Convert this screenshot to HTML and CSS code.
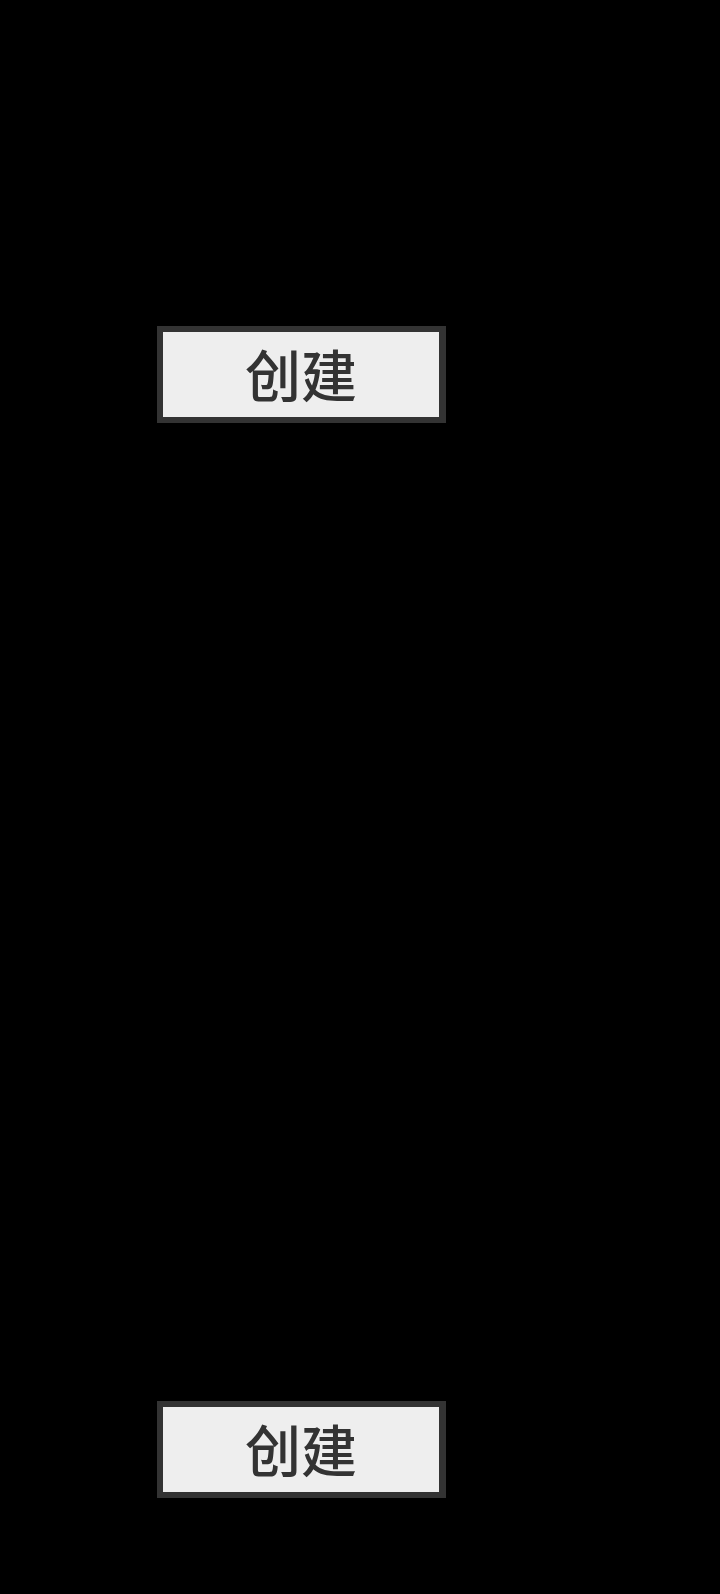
FILE: index.html
```html
<!DOCTYPE html>
<html lang="zh-CN">
<head>
<meta charset="utf-8">
<title>创建</title>
<link rel="stylesheet" href="styles.css">
</head>
<body>
<main class="screen">
  <button class="create-btn" type="button">创建</button>
  <button class="create-btn" type="button">创建</button>
</main>
</body>
</html>
```

FILE: styles.css
```css
html, body {
  margin: 0;
  padding: 0;
  background: #000;
}
.screen {
  width: 720px;
  height: 1594px;
  box-sizing: border-box;
  padding: 326px 0 0 157px;
  display: flex;
  flex-direction: column;
  align-items: flex-start;
  gap: 978px;
}
.create-btn {
  width: 289px;
  height: 97px;
  box-sizing: border-box;
  margin: 0;
  padding: 0 0 3px 0;
  border: 6px solid #333333;
  border-right-width: 7px;
  border-radius: 0;
  background: #eeeeee;
  color: #333333;
  font-family: "Noto Sans CJK SC", "Noto Sans", sans-serif;
  font-size: 56px;
  font-weight: 500;
  line-height: 1;
  display: flex;
  align-items: center;
  justify-content: center;
}
```
